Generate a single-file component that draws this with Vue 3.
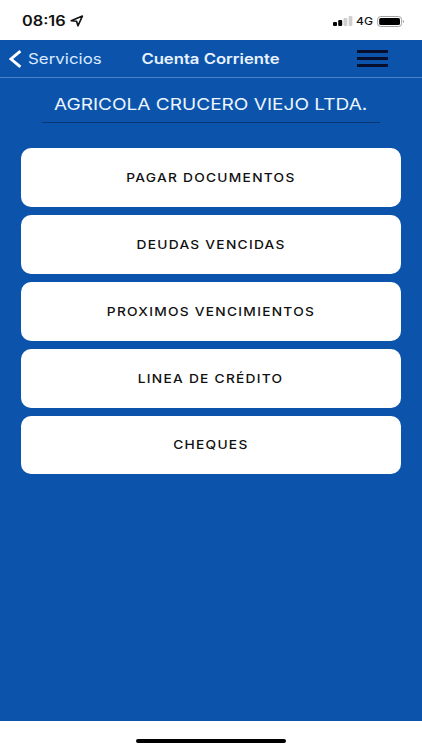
<template>
  <div class="screen">
    <header class="status">
      <div class="clock">
        <span class="wide time">08:16</span>
        <svg class="location" width="14" height="12" viewBox="0 0 14 12" fill="none">
          <path d="M1.2 5.7L12.4 1.1L7.9 10.8L6.6 6.2Z" stroke="#111" stroke-width="1.6" stroke-linejoin="round"/>
        </svg>
      </div>
      <div class="signals">
        <svg width="20" height="10" viewBox="0 0 20 10">
          <rect x="0" y="6" width="4" height="4" rx="1" fill="#050505"/>
          <rect x="5.2" y="4" width="4" height="6" rx="1" fill="#050505"/>
          <rect x="10.5" y="2" width="3.8" height="8" rx="1" fill="#cfcfcf"/>
          <rect x="15.6" y="0" width="3.8" height="10" rx="1" fill="#cfcfcf"/>
        </svg>
        <span class="wide network">4G</span>
        <svg width="28" height="11" viewBox="0 0 28 11">
          <rect x="0.6" y="0.5" width="24" height="10" rx="3" fill="none" stroke="#a3a3a3"/>
          <rect x="2.2" y="2" width="20.8" height="7" rx="1.6" fill="#000"/>
          <path d="M26 4C27.3 4.4 27.3 6.6 26 7Z" fill="#9a9a9a"/>
        </svg>
      </div>
    </header>

    <nav class="navbar">
      <button class="back">
        <svg width="13" height="18" viewBox="0 0 13 18" fill="none">
          <path d="M11.4 1.2L2 9L11.4 16.8" stroke="#fff" stroke-width="2.9"/>
        </svg>
        <span class="wide back-label">Servicios</span>
      </button>
      <h1 class="wide nav-title">Cuenta Corriente</h1>
      <button class="menu" aria-label="Menú">
        <span></span>
        <span></span>
        <span></span>
      </button>
    </nav>

    <main class="content">
      <div class="company">
        <h2 class="wide company-name">AGRICOLA CRUCERO VIEJO LTDA.</h2>
      </div>
      <div class="options">
        <button v-for="option in options" :key="option" class="option">
          <span class="wide option-label">{{ option }}</span>
        </button>
      </div>
    </main>

    <footer class="home">
      <div class="home-bar"></div>
    </footer>
  </div>
</template>

<script setup>
const options = [
  'PAGAR DOCUMENTOS',
  'DEUDAS VENCIDAS',
  'PROXIMOS VENCIMIENTOS',
  'LINEA DE CRÉDITO',
  'CHEQUES'
]
</script>

<style>
body {
  margin: 0;
}
</style>

<style scoped>
.screen {
  width: 422px;
  height: 750px;
  display: flex;
  flex-direction: column;
  overflow: hidden;
  background: #0c54ab;
  font-family: Inter, "Liberation Sans", sans-serif;
}

button {
  border: none;
  padding: 0;
  font-family: inherit;
  cursor: pointer;
}

h1,
h2 {
  margin: 0;
}

.wide {
  display: inline-block;
  white-space: nowrap;
  transform: scaleX(1.2);
}

/* status bar */
.status {
  height: 40px;
  box-sizing: border-box;
  padding: 2px 17px 0 21.5px;
  display: flex;
  align-items: center;
  justify-content: space-between;
  background: #fff;
  color: #111;
}
.clock,
.signals {
  display: flex;
  align-items: center;
}
.time {
  width: 48px;
  font-size: 13.8px;
  font-weight: 600;
  transform: scaleX(1.18);
  transform-origin: left;
}
.network {
  width: 21px;
  margin-left: 3px;
  font-size: 10.5px;
  font-weight: 500;
  transform: scaleX(1.15);
  transform-origin: left;
}

/* navigation */
.navbar {
  height: 38px;
  box-sizing: border-box;
  padding: 0 34px 0 9px;
  border-bottom: 1px solid #4a81c8;
  display: grid;
  grid-template-columns: 122px 159px 1fr;
  align-items: center;
  color: #e9f3ff;
}
.back {
  display: flex;
  align-items: center;
  gap: 6px;
  background: none;
  color: #d9e9ff;
}
.back-label {
  font-size: 14.5px;
  transform: scaleX(1.165);
  transform-origin: left;
}
.nav-title {
  font-size: 14px;
  font-weight: 600;
  text-align: center;
  transform: scaleX(1.19);
}
.menu {
  justify-self: end;
  width: 31px;
  display: flex;
  flex-direction: column;
  gap: 4px;
  background: none;
}
.menu span {
  height: 3px;
  background: #06102c;
}

/* content */
.content {
  flex: 1;
  padding: 0 21px;
}
.company {
  height: 45px;
  margin: 0 21px;
  box-sizing: border-box;
  padding-top: 15px;
  border-bottom: 1px solid #0a3573;
  text-align: center;
}
.company-name {
  font-size: 16.5px;
  font-weight: 400;
  line-height: 22px;
  color: #edf6ff;
  transform: scaleX(1.155);
}
.options {
  margin-top: 25.4px;
  display: flex;
  flex-direction: column;
  gap: 8.4px;
}
.option {
  height: 58.5px;
  padding-bottom: 1.5px;
  border-radius: 10px;
  background: #fff;
  color: #111;
}
.option-label {
  font-size: 12px;
  font-weight: 500;
  letter-spacing: 1.1px;
  transform: scaleX(1.145);
}

/* home indicator */
.home {
  height: 29px;
  display: flex;
  align-items: center;
  justify-content: center;
  background: #fff;
}
.home-bar {
  width: 150px;
  height: 4px;
  margin-top: 10px;
  border-radius: 2px;
  background: #000;
}
</style>
